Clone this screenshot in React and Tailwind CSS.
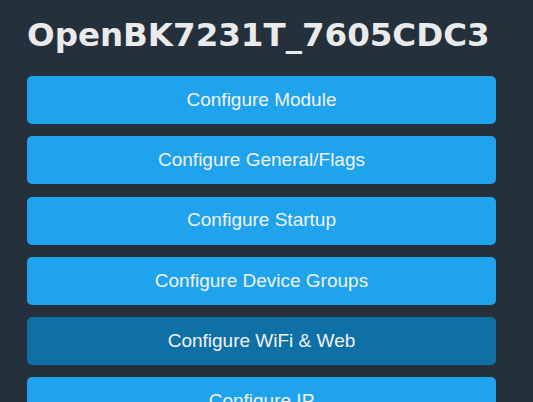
import React from 'react'

const items = [
  { label: 'Configure Module' },
  { label: 'Configure General/Flags' },
  { label: 'Configure Startup' },
  { label: 'Configure Device Groups' },
  { label: 'Configure WiFi & Web', active: true },
  { label: 'Configure IP' },
]

export default function App() {
  return (
    <div className="min-h-screen w-full bg-[#24313d] overflow-hidden font-['Liberation_Sans',Arial,sans-serif]">
      <div className="w-[469px] ml-[27px] pt-[16px]">
        <h1 className="text-[32.5px] leading-[38px] font-bold text-[#eaeaea] font-['DejaVu_Sans',Verdana,sans-serif] mb-[22px]">
          OpenBK7231T_7605CDC3
        </h1>
        <div className="flex flex-col gap-[12.25px]">
          {items.map((it) => (
            <button
              key={it.label}
              className={`h-[48px] shrink-0 w-full rounded-[5px] text-[19px] text-[#f2f2f2] ${
                it.active ? 'bg-[#0e70a4]' : 'bg-[#1fa3ec]'
              }`}
            >
              {it.label}
            </button>
          ))}
        </div>
      </div>
    </div>
  )
}
